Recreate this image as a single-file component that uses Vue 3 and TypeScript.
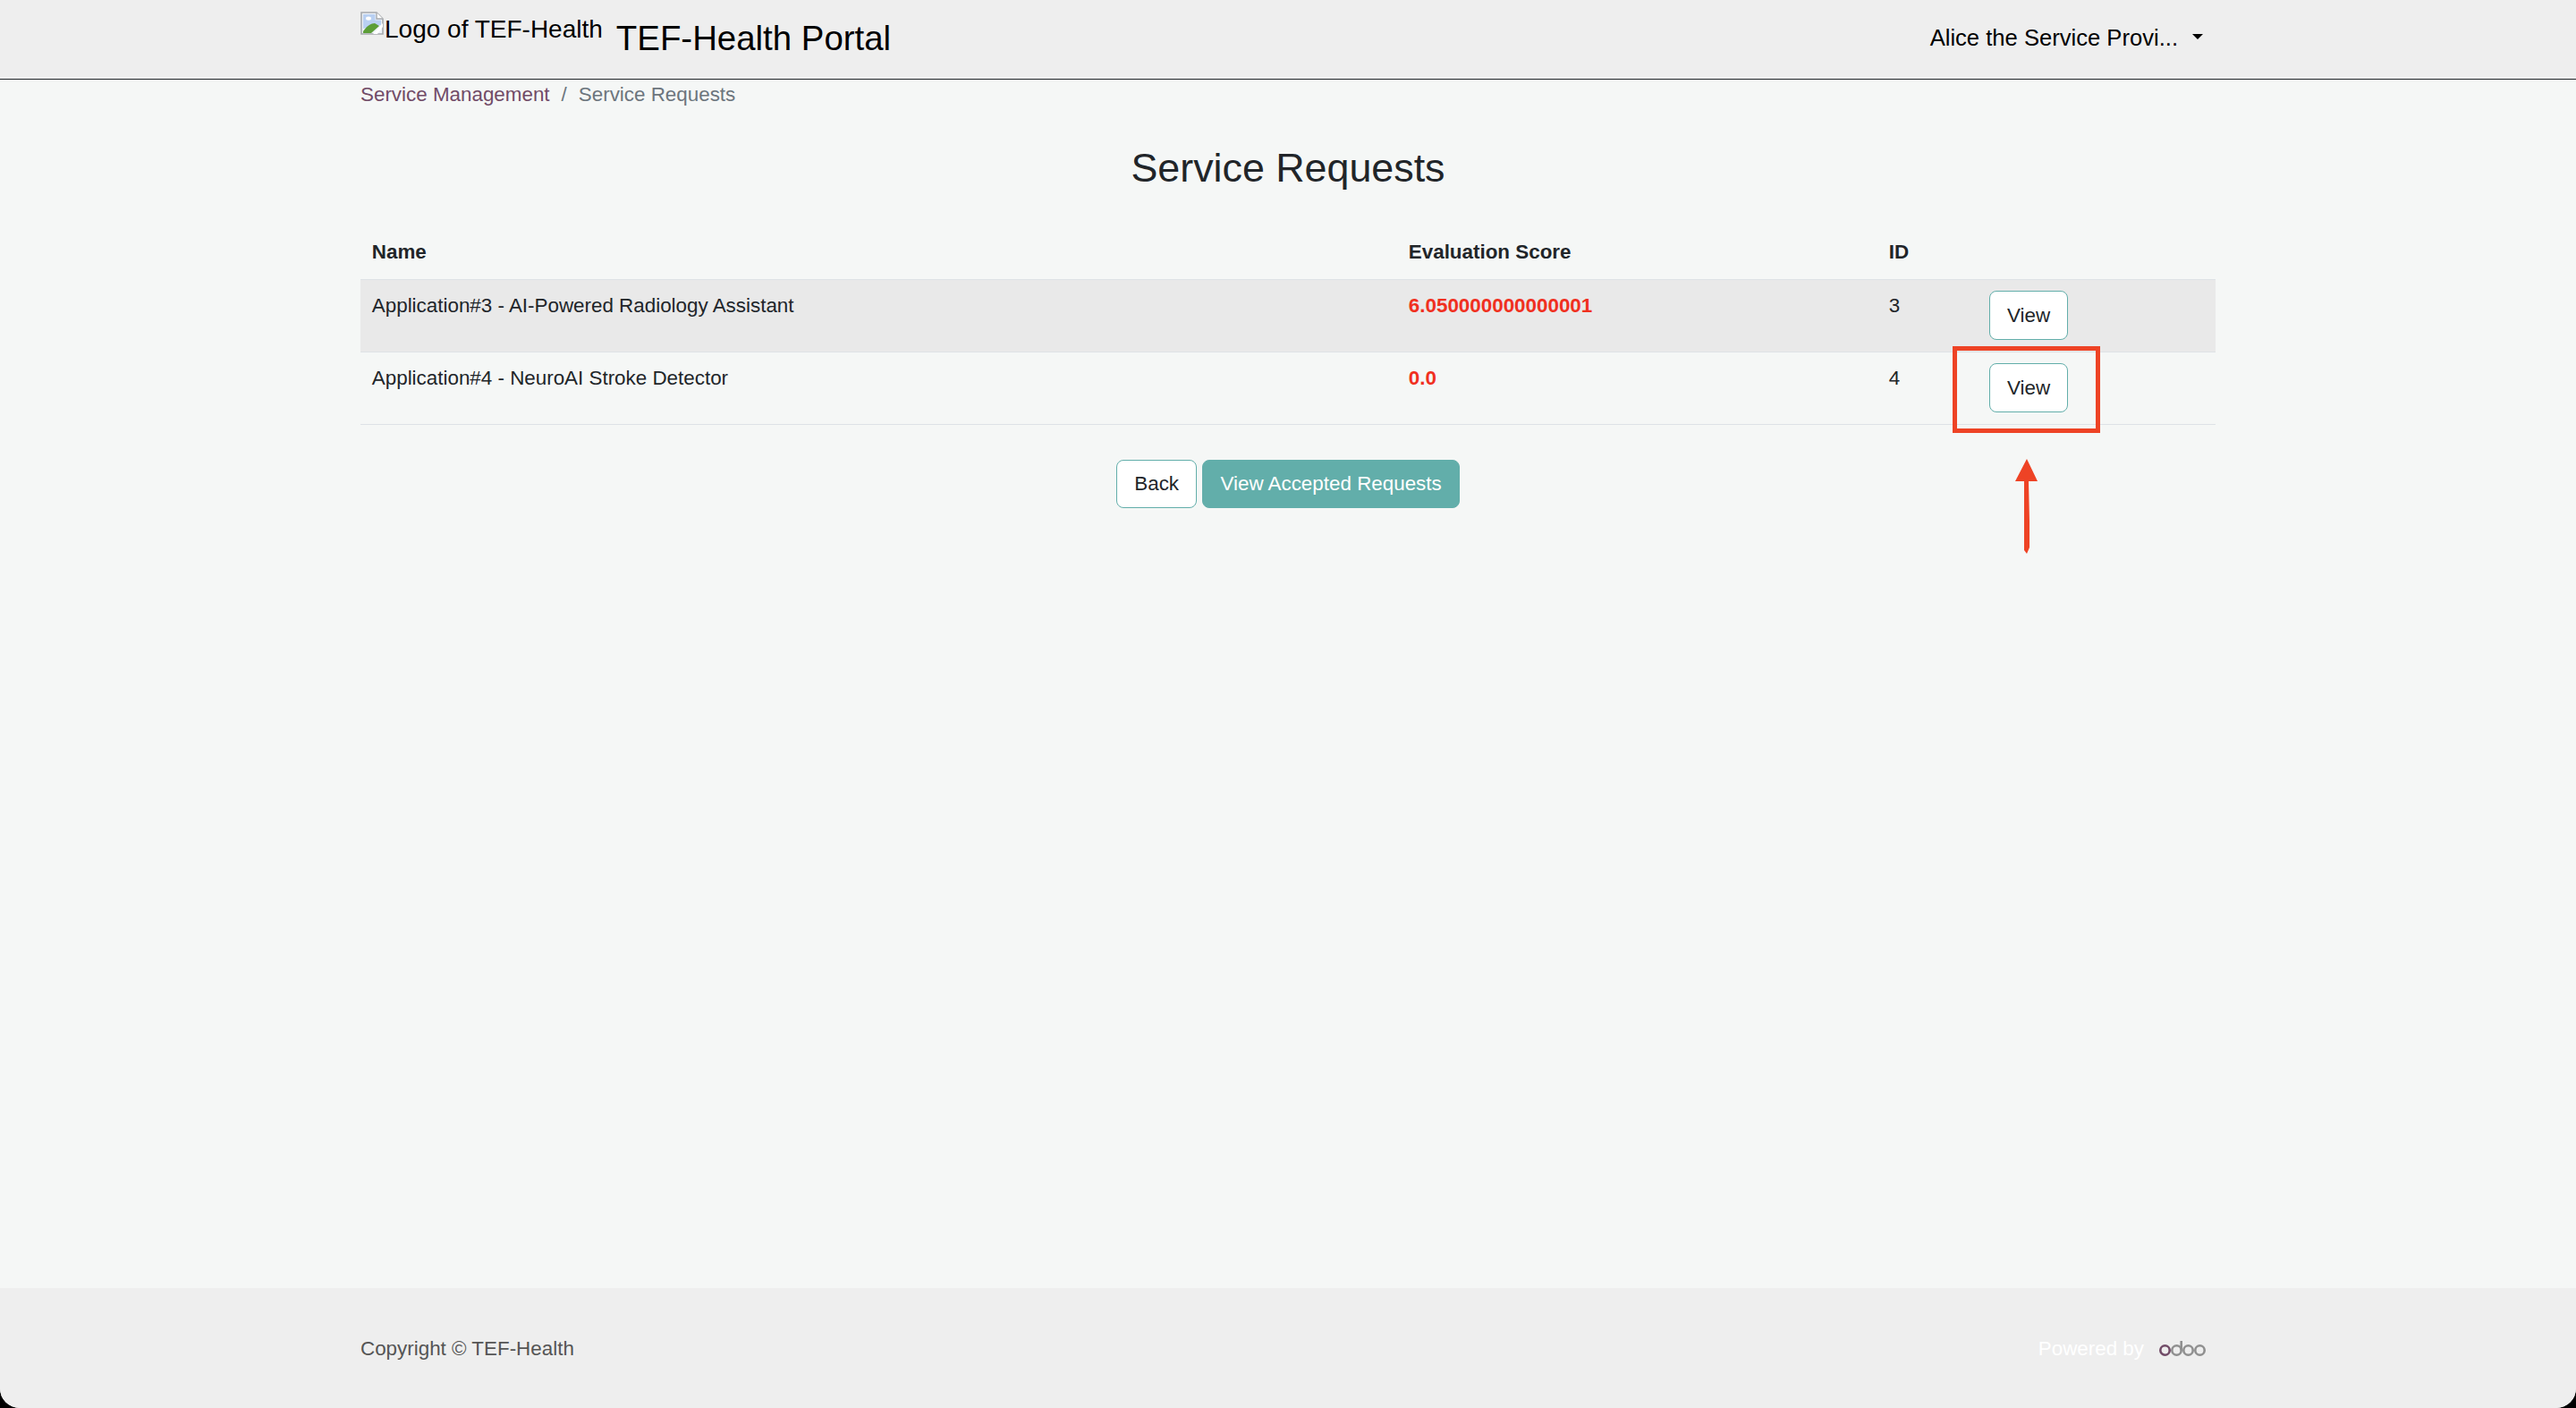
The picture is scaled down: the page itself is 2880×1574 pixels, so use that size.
<template>
  <div class="page">
    <header class="topbar">
      <div class="topbar-inner">
        <a class="logo">
          <svg class="broken" width="26" height="26" viewBox="0 0 26 26">
            <path d="M1 1H18L25 8V25H1Z" fill="#eef2f8" stroke="#a6a9ad" stroke-width="1.6" />
            <path d="M18 1V8H25" fill="#fff" stroke="#a6a9ad" stroke-width="1.4" />
            <path d="M3 3H16.500V9.500H23V15L3 19Z" fill="#b9d0f2" />
            <path d="M6 7.500a3 2 0 0 1 6 0a2 1.500 0 0 1 -6 0Z" fill="#fff" />
            <path d="M3 24V22C7 16 12 13 16 13L21 16L12 24Z" fill="#5c9e38" />
            <path d="M14 25L25 13V17L19 25Z" fill="#fff" />
          </svg>
          <span>Logo of TEF-Health</span>
        </a>
        <span class="portal">TEF-Health Portal</span>
        <div class="user">
          <span>{{ userName }}</span>
          <i class="caret"></i>
        </div>
      </div>
    </header>

    <main class="content">
      <nav class="crumbs">
        <a>Service Management</a>
        <span class="sep">/</span>
        <span class="current">Service Requests</span>
      </nav>

      <h1>Service Requests</h1>

      <table>
        <colgroup>
          <col class="c-name" />
          <col class="c-score" />
          <col class="c-id" />
          <col />
        </colgroup>
        <thead>
          <tr>
            <th>Name</th>
            <th>Evaluation Score</th>
            <th>ID</th>
            <th></th>
          </tr>
        </thead>
        <tbody>
          <tr v-for="row in requests" :key="row.id">
            <td>{{ row.name }}</td>
            <td class="score">{{ row.score }}</td>
            <td>{{ row.id }}</td>
            <td><button class="btn">View</button></td>
          </tr>
        </tbody>
      </table>

      <div class="actions">
        <button class="btn">Back</button>
        <button class="btn primary">View Accepted Requests</button>
      </div>
    </main>

    <footer class="bottom">
      <div class="bottom-inner">
        <span class="copy">Copyright © TEF-Health</span>
        <span class="powered">
          Powered by
          <svg class="odoo" width="52" height="18" viewBox="0 0 52 18">
            <circle cx="6.500" cy="10.500" r="5.200" fill="none" stroke="#714b67" stroke-width="2.600" />
            <circle cx="19.500" cy="10.500" r="5.200" fill="none" stroke="#8f8f8f" stroke-width="2.600" />
            <path d="M24.700 0V10.500" stroke="#8f8f8f" stroke-width="2.600" fill="none" />
            <circle cx="32.500" cy="10.500" r="5.200" fill="none" stroke="#8f8f8f" stroke-width="2.600" />
            <circle cx="45.500" cy="10.500" r="5.200" fill="none" stroke="#8f8f8f" stroke-width="2.600" />
          </svg>
        </span>
      </div>
    </footer>

    <!-- red annotation drawn over the screenshot -->
    <svg class="markup" width="2880" height="1574" viewBox="0 0 2880 1574">
      <rect x="2185.500" y="389.500" width="160" height="92" fill="none" stroke="#ee4325" stroke-width="5" />
      <path d="M2266 513L2278 538H2268L2269 583V612L2266 619L2263 615V538H2253Z" fill="#ee4325" />
    </svg>
  </div>
</template>

<script setup lang="ts">
const userName = 'Alice the Service Provi...'

const requests = [
  { id: 3, name: 'Application#3 - AI-Powered Radiology Assistant', score: '6.050000000000001' },
  { id: 4, name: 'Application#4 - NeuroAI Stroke Detector', score: '0.0' }
]
</script>

<style>
html,
body {
  margin: 0;
  background: #000;
}
</style>

<style scoped>
.page {
  position: relative;
  display: flex;
  flex-direction: column;
  height: 1574px;
  overflow: hidden;
  background: #f5f7f6;
  border-radius: 0 0 22px 22px;
  font-family: "Liberation Sans", Arial, sans-serif;
  font-size: 22.4px;
  line-height: 33.6px;
  color: #212529;
}

.topbar {
  height: 88px;
  background: #eeeeee;
  border-bottom: 1px solid #212529;
}

.topbar-inner {
  display: flex;
  width: 2074px;
  margin: 0 auto;
  color: #000;
}

.logo {
  display: flex;
  align-items: flex-end;
  height: 26px;
  margin-top: 13px;
  font-size: 28px;
  line-height: 30px;
}

.logo span {
  position: relative;
  top: 9px;
  margin-left: 1px;
}

.broken {
  flex: none;
}

.portal {
  margin: 21px 0 0 15px;
  font-size: 38.4px;
  line-height: 44px;
}

.user {
  display: flex;
  align-items: center;
  margin: 22px 14px 0 auto;
  height: 42px;
  font-size: 25.6px;
}

.caret {
  width: 0;
  height: 0;
  margin: -5px 0 0 16px;
  border-top: 6px solid #000;
  border-left: 6px solid transparent;
  border-right: 6px solid transparent;
}

.content {
  flex: 1;
  width: 2074px;
  margin: 0 auto;
}

.crumbs {
  display: flex;
  height: 33.6px;
}

.crumbs a {
  color: #714b67;
}

.sep {
  margin: 0 13px;
  color: #6c757d;
}

.current {
  color: #6c757d;
}

h1 {
  margin: 38.5px 0 37.5px;
  font-size: 44.8px;
  line-height: 53.8px;
  font-weight: 400;
  text-align: center;
}

table {
  width: 100%;
  table-layout: fixed;
  border-collapse: collapse;
}

.c-name {
  width: 1159px;
}

.c-score {
  width: 537px;
}

.c-id {
  width: 112px;
}

th,
td {
  padding: 12.8px;
  text-align: left;
  vertical-align: top;
  border-bottom: 1px solid #dee2e6;
}

th {
  font-weight: 700;
}

tbody tr:first-child {
  background: #e9e9e9;
}

.score {
  font-weight: 700;
  color: #f0301f;
}

.btn {
  display: block;
  height: 54.4px;
  padding: 0 19.2px;
  background: #fff;
  border: 1px solid #62aeaa;
  border-radius: 8px;
  font: inherit;
  color: #212529;
}

.actions {
  display: flex;
  justify-content: center;
  gap: 6px;
  margin-top: 39px;
}

.primary {
  background: #62aeaa;
  color: #fff;
}

.bottom {
  height: 134px;
  background: #eeeeee;
}

.bottom-inner {
  display: flex;
  justify-content: space-between;
  align-items: center;
  box-sizing: border-box;
  width: 2074px;
  height: 100%;
  margin: 0 auto;
  padding-top: 1px;
}

.copy {
  color: #555;
}

.powered {
  display: flex;
  align-items: center;
  margin-right: 11px;
  color: #fff;
}

.odoo {
  margin-left: 17px;
}

.markup {
  position: absolute;
  top: 0;
  left: 0;
  pointer-events: none;
}
</style>
